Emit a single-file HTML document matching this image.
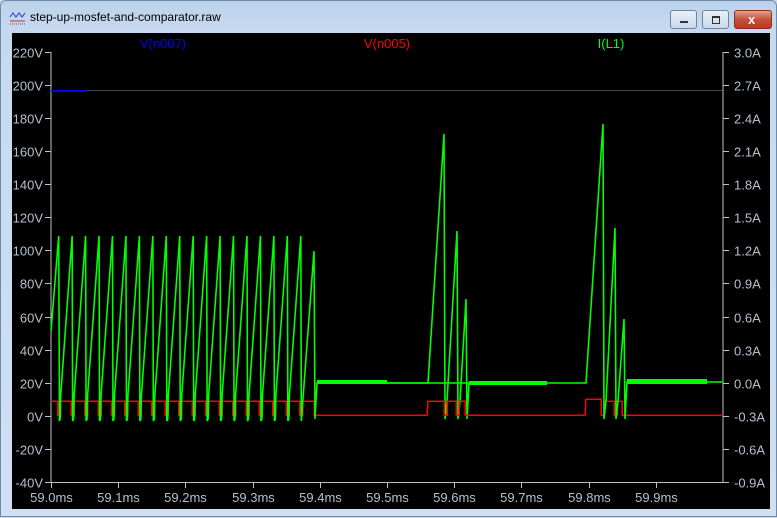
<!DOCTYPE html>
<html><head><meta charset="utf-8"><style>
html,body{margin:0;padding:0;width:777px;height:517px;overflow:hidden;background:#c9dbef}
.win{position:absolute;left:0;top:0;width:777px;height:517px;background:linear-gradient(#bcd2ec,#c6d9ef 30px,#cfe0f2);border:1px solid #6f8aa8;box-sizing:border-box;border-radius:6px 6px 0 0}
.title{position:absolute;left:29px;top:9px;font:12px "Liberation Sans",sans-serif;color:#000}
.btn{position:absolute;top:9px;height:19px;border:1px solid #6d83a0;border-radius:3px;box-sizing:border-box;background:linear-gradient(#e8f0f9,#c9d8ea)}
.plot{position:absolute;left:11px;top:32px;width:758px;height:476px;background:#000}
svg text{font-family:"Liberation Sans",sans-serif;font-size:13px}
</style></head><body>
<div class="win">
<svg style="position:absolute;left:8px;top:10px" width="18" height="16"><path d="M1 6 L4 2 L7 6 L10 2 L13 6 L16 2" stroke="#2040c0" fill="none"/><path d="M1 10 H16" stroke="#c03030"/><path d="M1 13 H16" stroke="#c03030" stroke-dasharray="1,1"/></svg>
<div class="title">step-up-mosfet-and-comparator.raw</div>
<div class="btn" style="left:669px;width:27px"><div style="position:absolute;left:9px;top:10px;width:8px;height:2px;background:#333"></div></div>
<div class="btn" style="left:701px;width:27px"><div style="position:absolute;left:9px;top:5px;width:6px;height:5px;border:1px solid #333;border-top-width:2px"></div></div>
<div class="btn" style="left:733px;width:38px;background:linear-gradient(#e0a090,#c8503a 50%,#b83a20);border-color:#8a3020"><div style="position:absolute;left:13px;top:1px;color:#fff;font:bold 13px 'Liberation Sans',sans-serif">x</div></div>
<div class="plot"></div>
<svg id="s" style="position:absolute;left:0;top:0" width="777" height="517"></svg>
</div>
<script>
var s='';
var L=50,R=722,T=51,B=481;
var yv=function(v){return 414.8-v*33.08/20};
s+='<line x1="'+L+'" y1="89.5" x2="'+R+'" y2="89.5" stroke="#404040"/>';
s+='<polyline fill="none" stroke="#c0c0c0" points="'+L+','+T+' '+L+','+(B+0.5)+' '+R+','+(B+0.5)+' '+R+','+T+'"/>';
for(var i=0;i<14;i++){var v=220-20*i,y=Math.round(yv(v))+0.5;
s+='<line x1="44" y1="'+y+'" x2="'+L+'" y2="'+y+'" stroke="#c0c0c0"/>';
s+='<text x="42" y="'+(y+5)+'" fill="#b4c0d0" text-anchor="end">'+v+'V</text>';
var a=(3.0-0.3*i).toFixed(1);
s+='<line x1="'+R+'" y1="'+y+'" x2="'+(R+6)+'" y2="'+y+'" stroke="#c0c0c0"/>';
s+='<text x="733" y="'+(y+5)+'" fill="#b4c0d0">'+a+'A</text>';}
for(var j=0;j<10;j++){var x=Math.round(L+j*67.2)+0.5;
s+='<line x1="'+x+'" y1="'+B+'" x2="'+x+'" y2="'+(B+6)+'" stroke="#c0c0c0"/>';
s+='<text x="'+x+'" y="501" fill="#b4c0d0" text-anchor="middle">'+(59+j/10).toFixed(1)+'ms</text>';}
s+='<text x="162" y="47" fill="#0000ff" text-anchor="middle">V(n007)</text>';
s+='<text x="386" y="47" fill="#ff0000" text-anchor="middle">V(n005)</text>';
s+='<text x="610" y="47" fill="#00ff00" text-anchor="middle">I(L1)</text>';
s+='<line x1="50" y1="90" x2="85" y2="90" stroke="#0000ff" stroke-width="2"/>';
var g='M50,330 L57.7,235 L58.5,418 ';var r='M50,400 ';
for(var k=0;k<19;k++){var p=57.7+k*13.45;if(p>313)break;
if(k>0){g+='L'+(p-12)+',418 L'+(p-11.5)+',395 L'+p+',235 ';}
g+='L'+(p+0.5)+',420 ';
r+='L'+(p-1)+',400 L'+(p-1)+',414 L'+(p+2)+',414 L'+(p+2)+',400 ';}
g+='L313,250 L314,418 L316,382 L585,382 L602,123 L603,418 L605,400 L614,227 L615,418 L617,400 L623,318 L624,418 L626,381 L722,381';
r+='L313,400 L313,414 L426,414 L427,400 L443,400 L443,414 L446,414 L446,400 L455,400 L455,414 L458,414 L458,400 L464,400 L464,414 L584,414 L585,398 L600,398 L600,414 L603,414 L603,400 L613,400 L613,414 L616,414 L616,400 L621,400 L621,414 L722,414';
s+='<path d="M316,382 L427,382 L443,133 L444,418 L446,400 L456,230 L457,418 L459,400 L465,298 L466,418 L468,383" fill="none" stroke="#00ff00" stroke-width="1.6"/>';
s+='<path d="'+r+'" fill="none" stroke="#ff0000" stroke-width="1.5" shape-rendering="crispEdges"/>';
s+='<path d="'+g+'" fill="none" stroke="#00ff00" stroke-width="1.6"/>';
s+='<rect x="468" y="380" width="78" height="4" fill="#00ff00"/><rect x="626" y="378" width="80" height="5" fill="#00ff00"/><rect x="316" y="379" width="70" height="4" fill="#00ff00"/>';
document.getElementById('s').innerHTML=s;
</script>
</body></html>
